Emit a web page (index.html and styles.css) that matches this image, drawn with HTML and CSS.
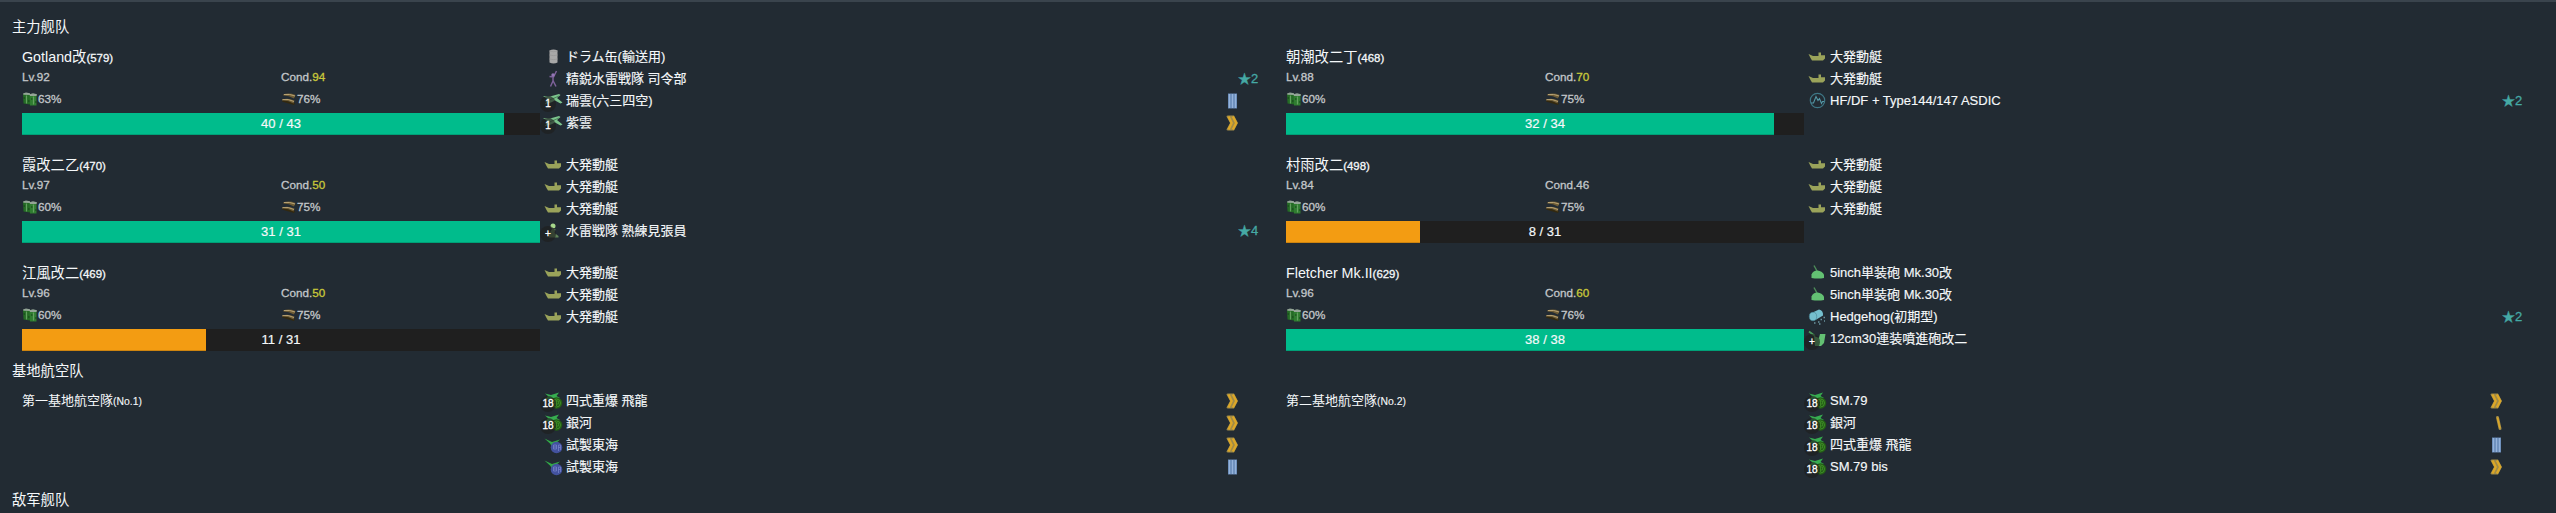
FILE: index.html
```html
<!DOCTYPE html>
<html lang="zh-CN">
<head>
<meta charset="utf-8">
<title>舰队</title>
<link rel="stylesheet" href="styles.css">
<script src="fleet.js" defer></script>
</head>
<body>
<svg class="defs" aria-hidden="true">
  <symbol id="fuel" viewBox="0 0 16 16">
    <path d="M1 3H8V13.500L1.500 12.500z" fill="#246b25"/><path d="M7.500 4H14.500V14.500H8z" fill="#2f7d30"/>
    <path d="M1 2.500 4 1.500 8 2.300V4L1.500 3.800zM7.500 3.300 11 2.200 15 3.300 14.500 5H8z" fill="#93a596"/>
    <path d="M4.500 4.500v8M11.500 5.500v8" stroke="#63a05f" stroke-width="1.200"/>
    <path d="M1.500 7h1.500M6 10h1.500M9 8h1.500M13 11h1.500" stroke="#143f18"/>
  </symbol>
  <symbol id="ammo" viewBox="0 0 16 16">
    <path d="M2 9 14 12 13 14 1 10.500z" fill="#33290f"/>
    <path d="M2 3.500Q8 1.500 14.500 4L13 7.500Q8 4.500 2.500 4.500zM1 8.500Q7 6.500 13.500 9.500L12.500 12.500Q7 9 1 9.500z" fill="#6e5c35"/>
    <path d="M3 3.500Q9 2.800 14 5M1.500 8.600Q7 7.500 13 10.500" fill="none" stroke="#b7a274" stroke-width="1"/>
  </symbol>
  <symbol id="drum" viewBox="0 0 22 22"><path d="M8.500 4.500q4-1.800 8 0v12q-4 1.800-8 0z" fill="#a8a8a8"/><path d="M8.500 5q4 1.600 8 0M8.500 9q4 1.300 8 0M8.500 13q4 1.300 8 0" stroke="#989898" fill="none" stroke-width=".8"/></symbol>
  <symbol id="command" viewBox="0 0 22 22"><path d="M8.500 8.500 12.500 9 15.500 3M12 9v5M12 13 9.500 18.500M12.200 13 15 18.500" fill="none" stroke="#7d6199" stroke-width="1.500"/><circle cx="12" cy="7" r="1.700" fill="#9476b5"/></symbol>
  <symbol id="seaplane" viewBox="0 0 22 22"><path d="M2 6 9 6.500 18 4 19.500 5 16 8 21.500 12.500 19.500 13.500 14 10.500 10 12.500 4 14 7 9.500z" fill="#7cc48d"/><path d="M5 11.500 18 6" stroke="#4b875a"/></symbol>
  <symbol id="boat" viewBox="0 0 22 22"><path d="M3.500 8 8 10H13.500V6.500H16V9.300H20V12.500L18 14.500H7L5.500 12z" fill="#9aa35a"/></symbol>
  <symbol id="lookout" viewBox="0 0 22 22"><circle cx="12" cy="6" r="2.500" fill="#a7d88c"/><path d="M11 9 14.500 9 13.500 13 17.500 16V17.500H8V14z" fill="#5f8357"/></symbol>
  <symbol id="bomber" viewBox="0 0 22 22"><path d="M4 3.500 10 5 18 2.500 15.500 6 19 8 11 8.500 4 10 7 6z" fill="#37ad50"/><circle cx="15.500" cy="13" r="5.800" fill="#235d16"/><circle cx="15.500" cy="13" r="4" fill="none" stroke="#3f8e27"/><path d="M13.500 11h4v3h-4zM15.500 10v6" stroke="#3f8e27" fill="none" stroke-width=".8"/></symbol>
  <symbol id="patrol" viewBox="0 0 22 22"><path d="M3.500 4.500 11 8 19 5.500 13 11 12 16 9.500 10z" fill="#32aa48"/><circle cx="15.500" cy="13.500" r="5.800" fill="#43529f"/><path d="M12.500 11h3v4h-3zM12.500 13h3M17.500 17v-6h2v5M17.500 13.500h2" fill="none" stroke="#7b88cf" stroke-width=".7"/></symbol>
  <symbol id="sonar" viewBox="0 0 22 22"><circle cx="12.500" cy="10.500" r="7.200" fill="none" stroke="#3e7786" stroke-width="1.200"/><path d="M6 13h2.500l2.500-6.500 2 4 1.500-2 2 5 1-2H19" fill="none" stroke="#5498a7" stroke-width="1.100"/></symbol>
  <symbol id="gun" viewBox="0 0 22 22"><path d="M9 3.500 12 9" stroke="#4d8d59" stroke-width="1.400"/><path d="M6.500 16V12.500Q8 8.500 12.500 8.500 17 9 19 12.500V16q-6 1.200-12.500 0z" fill="#63c173"/></symbol>
  <symbol id="hedgehog" viewBox="0 0 22 22"><path d="M6.500 7 14 3.500q4.500 1 4 6L10.500 14z" fill="#75bfce"/><ellipse cx="8" cy="10.500" rx="3.700" ry="4.200" fill="#75bfce" stroke="#447f90" stroke-width=".6"/><path d="M9 17h1.500M13 16h1.500M15.500 13.500H17M14 18h1.500M18.500 11.500H20M19 15h1" stroke="#6a95a0" stroke-width="1.500"/></symbol>
  <symbol id="rocket" viewBox="0 0 22 22"><path d="M4 3.500 10 8" stroke="#4b9c5c" stroke-width="1.800"/><path d="M9 8 14 10 15 6H20.500L19 15 16 18H10z" fill="#63c173"/></symbol>
  <symbol id="rank3" viewBox="0 0 12 16"><path d="M2 .5h9v15H2z" fill="#6487b4"/><path d="M3.500 1v14M6.500 1v14M9.500 1v14" stroke="#94b2da" stroke-width="1.500"/></symbol>
  <symbol id="rank4" viewBox="0 0 12 16"><path d="M7.500 2.500 10 13.500" stroke="#a08b48" stroke-width="3" stroke-linecap="round"/><path d="M7.500 2.500 10 13.500" stroke="#dca727" stroke-width="1.600"/></symbol>
  <symbol id="rank7" viewBox="0 0 12 16"><path d="M.5 1.500Q.5.500 2 .5H8L12 8 8 15.500H2Q.5 15.500.5 14.500L4 8z" fill="#a08b48"/><path d="M2.500 1.500 5.700 8 2.500 14.500M6.900 1.500 10.200 8 6.900 14.500" fill="none" stroke="#dca727" stroke-width="2.300"/></symbol>
</svg>
<main class="replay">
  <h2 class="title">主力舰队</h2>
  <section class="fleet" id="main-fleet"></section>
  <h2 class="title title-base">基地航空队</h2>
  <section class="fleet" id="air-base"></section>
  <h2 class="title title-enemy">敌军舰队</h2>
</main>
</body>
</html>
```
FILE: styles.css
```css
* { box-sizing: border-box; }
body {
  margin: 0;
  height: 513px;
  overflow: hidden;
  background: #222b33;
  border-top: 2px solid #3a444d;
  color: #f5f8fa;
  font: 13px/22px "Liberation Sans", "Noto Sans CJK JP", sans-serif;
  -webkit-text-stroke: .15px;
}
.defs { position: absolute; width: 0; height: 0; }
.replay { padding: 14px 12px 0; }
.title {
  margin: 0 0 8px;
  height: 22px;
  font-family: "Liberation Sans", "Noto Sans CJK SC", sans-serif;
  font-size: 14.3px;
  font-weight: 400;
  -webkit-text-stroke: 0;
}
.title-base { margin-top: 10px; }
.title-enemy { margin-top: 11px; }
.fleet {
  display: grid;
  grid-template-columns: 1264px 1264px;
  row-gap: 20px;
  padding-left: 10px;
}
.unit { display: flex; height: 88px; }
.info { width: 518px; }
.name { height: 21px; font-size: 14.3px; white-space: nowrap; -webkit-text-stroke: 0; }
.name small { font-size: 80%; -webkit-text-stroke: .3px; }
.name-base { font-size: 13px; }
.name-base small { -webkit-text-stroke: .1px; }
.stats {
  display: grid;
  grid-template-columns: 1fr 1fr;
  grid-template-rows: 21px 22px;
  font-size: 11.7px;
  line-height: 20px;
  color: #c3c7ca;
  -webkit-text-stroke: .3px;
}
.stat { display: flex; align-items: center; white-space: nowrap; }
.stat:nth-child(-n+2) { height: 20px; }
.cond-high { color: #c9c93a; }
.res { width: 16px; height: 16px; }
.bar {
  display: grid;
  height: 22px;
  margin-top: 3px;
  background: #1f1f1f;
}
.fill, .hp { grid-area: 1 / 1; }
.fill { background: #00bc8c; box-shadow: inset 0 -1px rgba(0, 0, 0, .15); }
.fill-low { background: #f39c12; }
.hp { text-align: center; line-height: 21px; z-index: 1; -webkit-text-stroke: .2px; }
.equips { width: 726px; }
.equip { display: flex; height: 22px; line-height: 21px; }
.slot { position: relative; width: 26px; height: 22px; }
.slot svg { display: block; width: 24px; height: 22px; }
.badge {
  position: absolute;
  left: 0;
  top: 6px;
  width: 16px;
  height: 16px;
  border-radius: 50%;
  background: rgba(31, 31, 31, .65);
  font-size: 10px;
  line-height: 15px;
  text-align: center;
  color: #fff;
  -webkit-text-stroke: .3px;
}
.label { flex: 1; white-space: nowrap; }
.rank { width: 12px; height: 16px; margin-top: 3px; }
.star { width: 28px; color: #45a9a5; white-space: nowrap; -webkit-text-stroke: .3px; }
```
FILE: fleet.js
```js
const boats = n => Array.from({ length: n }, () => ['boat', '大発動艇']);
const ships = [
  { name: 'Gotland改', id: 579, lv: 92, cond: 94, fuel: 63, ammo: 76, hp: 40, max: 43, equips: [
    ['drum', 'ドラム缶(輸送用)'], ['command', '精鋭水雷戦隊 司令部', '', '', 2],
    ['seaplane', '瑞雲(六三四空)', '1', 'rank3'], ['seaplane', '紫雲', '1', 'rank7']] },
  { name: '朝潮改二丁', id: 468, lv: 88, cond: 70, fuel: 60, ammo: 75, hp: 32, max: 34, equips: [
    ...boats(2), ['sonar', 'HF/DF + Type144/147 ASDIC', '', '', 2]] },
  { name: '霞改二乙', id: 470, lv: 97, cond: 50, fuel: 60, ammo: 75, hp: 31, max: 31, equips: [
    ...boats(3), ['lookout', '水雷戦隊 熟練見張員', '+', '', 4]] },
  { name: '村雨改二', id: 498, lv: 84, cond: 46, fuel: 60, ammo: 75, hp: 8, max: 31, equips: boats(3) },
  { name: '江風改二', id: 469, lv: 96, cond: 50, fuel: 60, ammo: 75, hp: 11, max: 31, equips: boats(3) },
  { name: 'Fletcher Mk.II', id: 629, lv: 96, cond: 60, fuel: 60, ammo: 76, hp: 38, max: 38, equips: [
    ['gun', '5inch単装砲 Mk.30改'], ['gun', '5inch単装砲 Mk.30改'],
    ['hedgehog', 'Hedgehog(初期型)', '', '', 2], ['rocket', '12cm30連装噴進砲改二', '+']] },
];
const bases = [
  { name: '第一基地航空隊', id: 'No.1', equips: [
    ['bomber', '四式重爆 飛龍', '18', 'rank7'], ['bomber', '銀河', '18', 'rank7'],
    ['patrol', '試製東海', '', 'rank7'], ['patrol', '試製東海', '', 'rank3']] },
  { name: '第二基地航空隊', id: 'No.2', equips: [
    ['bomber', 'SM.79', '18', 'rank7'], ['bomber', '銀河', '18', 'rank4'],
    ['bomber', '四式重爆 飛龍', '18', 'rank3'], ['bomber', 'SM.79 bis', '18', 'rank7']] },
];

const icon = (id, cls = '') => `<svg class="${cls}"><use href="#${id}"/></svg>`;
const equip = ([type, label, badge, rank, star]) => `<div class="equip">
  <span class="slot">${icon(type)}${badge ? `<span class="badge">${badge}</span>` : ''}</span>
  <span class="label">${label}</span>
  ${rank ? icon(rank, 'rank') : ''}<span class="star">${star ? '★' + star : ''}</span></div>`;
const stats = s => `<div class="stats">
  <span class="stat">Lv.${s.lv}</span>
  <span class="stat">Cond.<span class="${s.cond >= 50 ? 'cond-high' : ''}">${s.cond}</span></span>
  <span class="stat">${icon('fuel', 'res')}${s.fuel}%</span>
  <span class="stat">${icon('ammo', 'res')}${s.ammo}%</span></div>
  <div class="bar"><div class="fill ${s.hp / s.max < 0.5 ? 'fill-low' : ''}" style="width:${100 * s.hp / s.max}%"></div>
  <span class="hp">${s.hp} / ${s.max}</span></div>`;
const unit = u => `<article class="unit"><div class="info">
  <div class="name ${u.hp ? '' : 'name-base'}">${u.name}<small>(${u.id})</small></div>${u.hp ? stats(u) : ''}</div>
  <div class="equips">${u.equips.map(equip).join('')}</div></article>`;

document.getElementById('main-fleet').innerHTML = ships.map(unit).join('');
document.getElementById('air-base').innerHTML = bases.map(unit).join('');
```
